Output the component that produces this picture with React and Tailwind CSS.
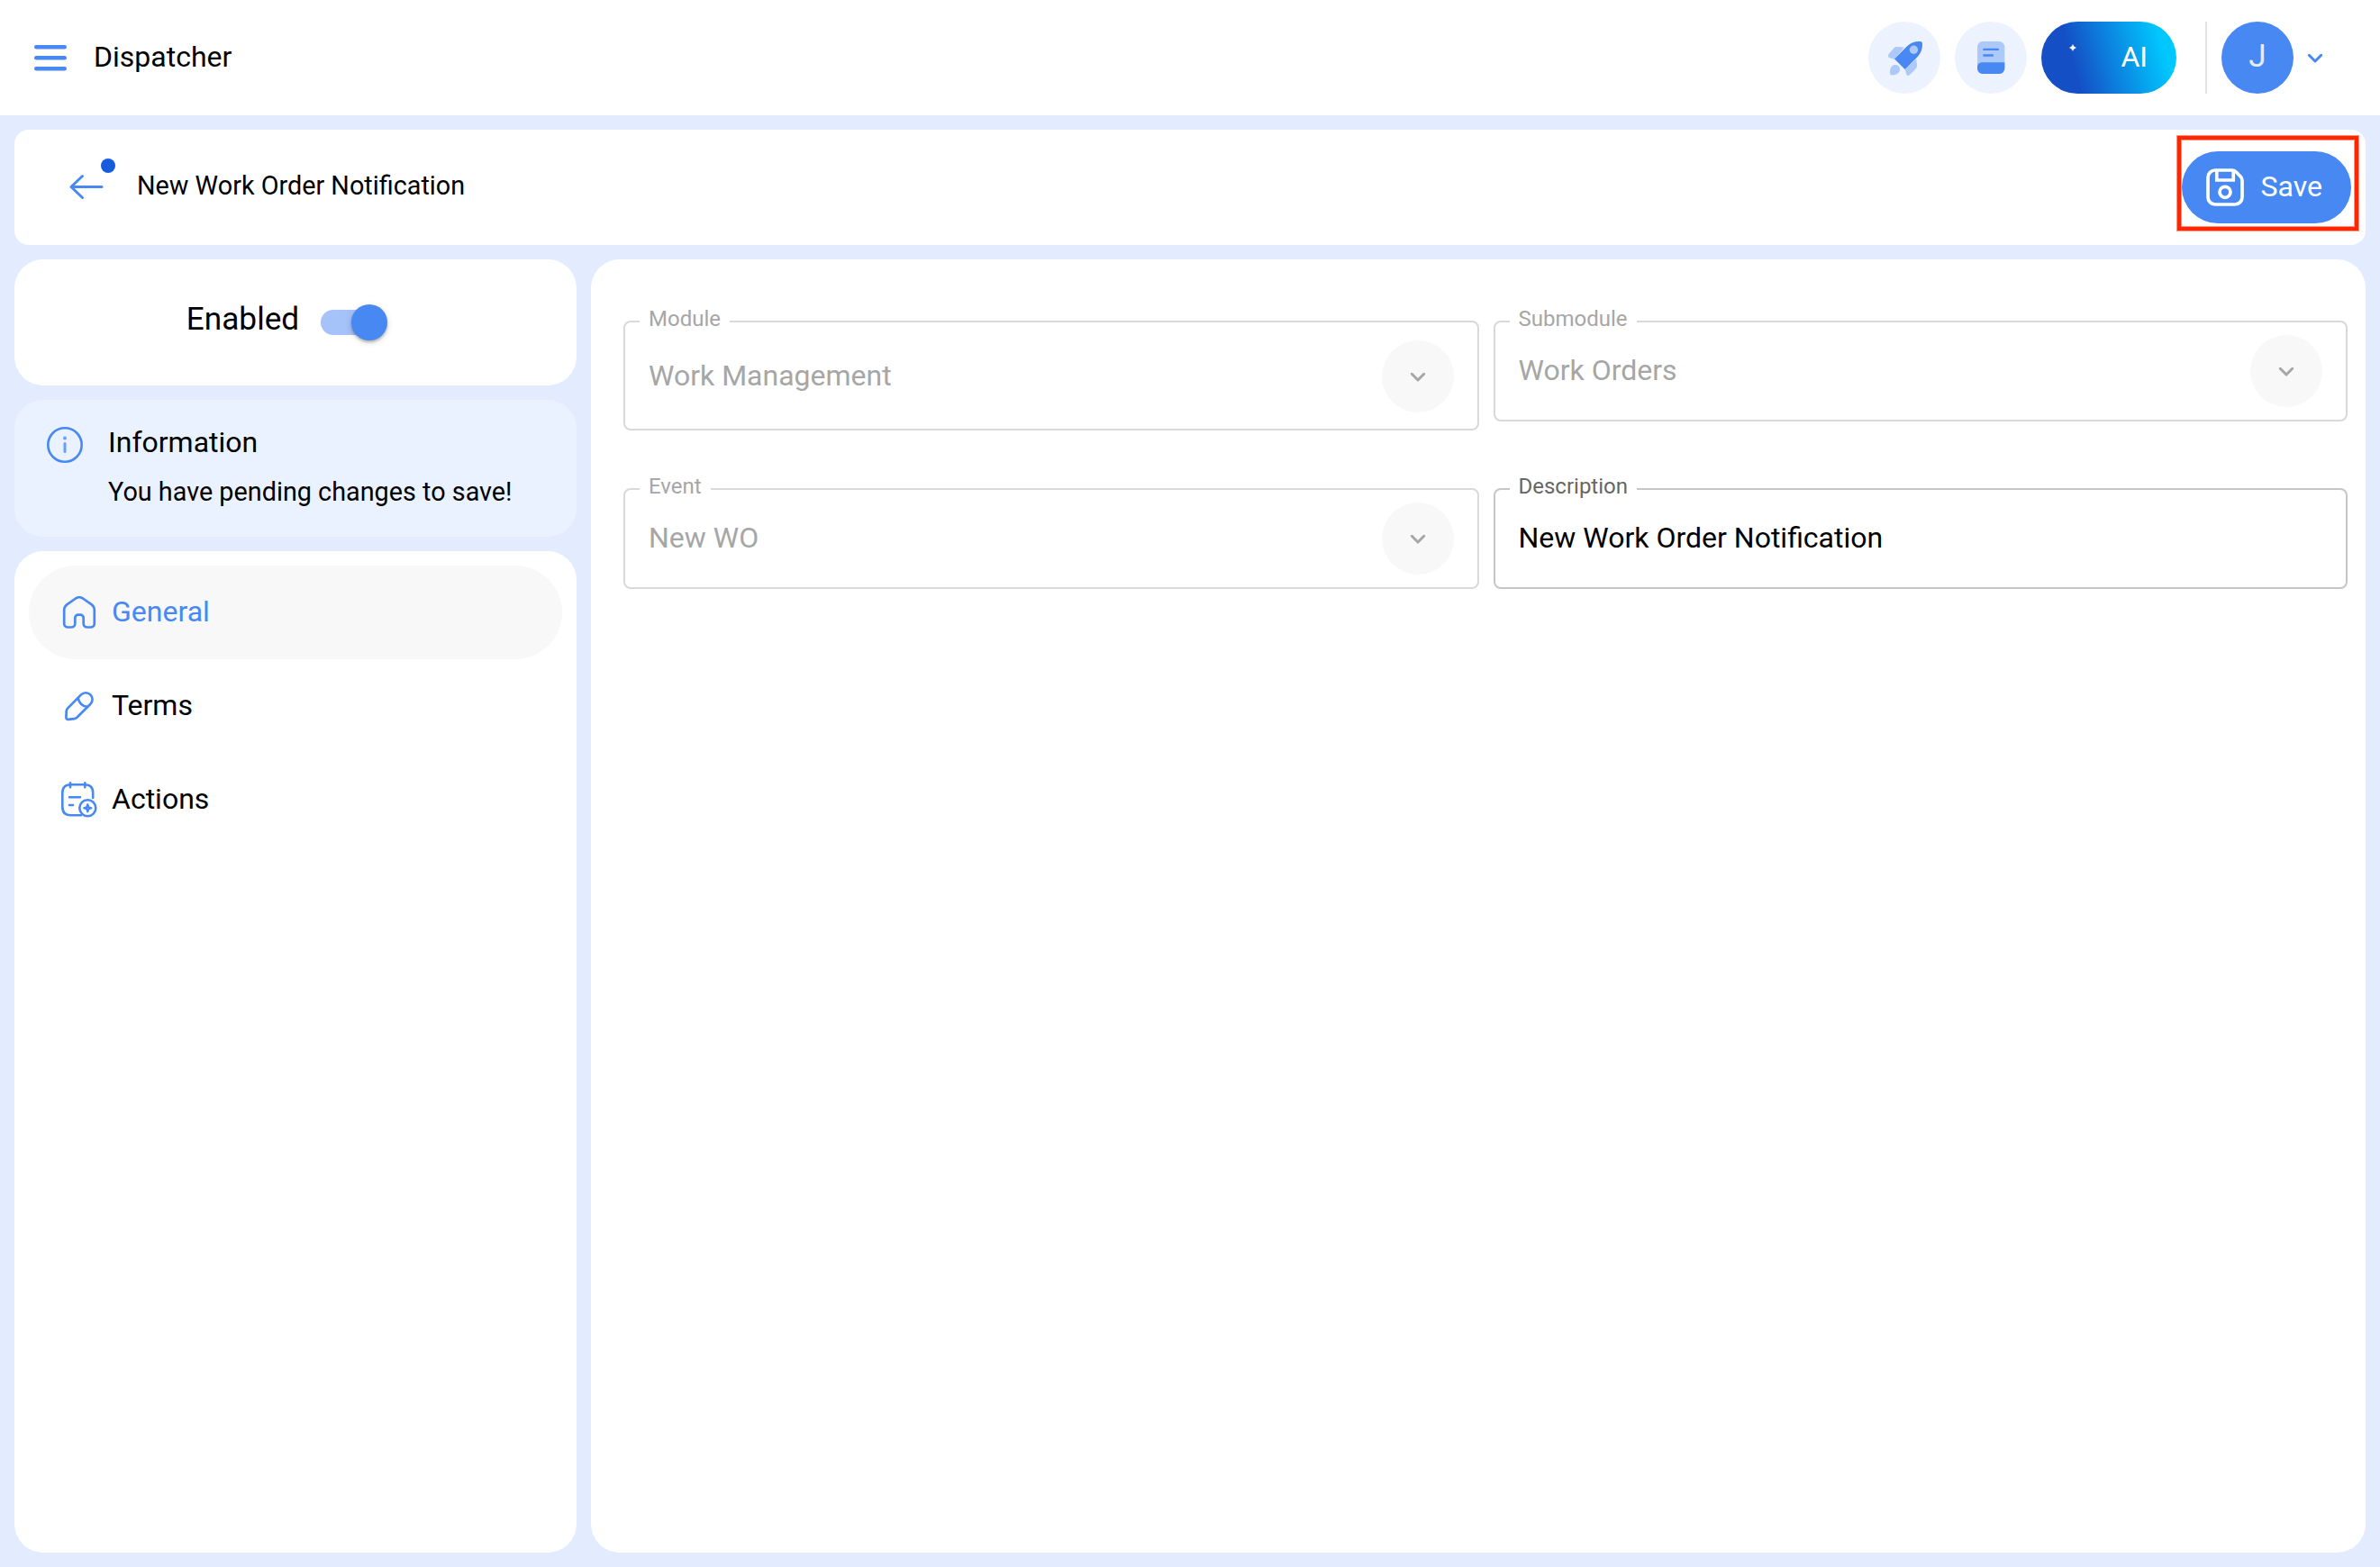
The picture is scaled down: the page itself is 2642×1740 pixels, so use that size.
import React, { useState } from 'react';
import clsx from 'clsx';

const ChevronIcon = ({ className }) => (
  <svg viewBox="0 0 24 24" fill="none" stroke="currentColor" strokeWidth="3" strokeLinecap="round" strokeLinejoin="round" className={clsx('h-6 w-6 shrink-0', className)}>
    <path d="M5.3 9.3 12 16l6.7-6.7" />
  </svg>
);

const MenuIcon = () => (
  <svg viewBox="0 0 48 48" fill="none" stroke="currentColor" strokeWidth="4.4" strokeLinecap="round" className="h-12 w-12">
    <path d="M8.2 12.3h31.6M8.2 24.3h31.6M8.2 36.3h31.6" />
  </svg>
);

const BackIcon = () => (
  <svg viewBox="0 0 48 48" fill="none" stroke="currentColor" strokeWidth="3" strokeLinecap="round" strokeLinejoin="round" className="h-12 w-12">
    <path d="M41 23.5H7M19.5 11.5 7 23.5l12.5 12" />
  </svg>
);

const RocketIcon = () => (
  <svg viewBox="0 0 48 48" className="h-12 w-12">
    <path fill="#adc9fa" d="M24 12.6 16 12c-2-.1-3 .5-4 1.7L6.5 20.3c-1.1 1.5-.6 3.4 1 3.9l5.5 1.5Z" />
    <path fill="#adc9fa" d="M37.2 25.5 38 31.5c.3 2.2-.2 3.7-1.5 5L30 43c-1.5 1.3-3.2 1.2-3.8-.5L24.7 37Z" />
    <path fill="#adc9fa" d="M8 40c0-5.5 2.6-8 6-8 3.5 0 5.3 2.5 5 5.5-.4 3.6-4 5.8-9 5.8-1.5 0-2-.8-2-3.3Z" />
    <path fill="#4788f3" d="M13 25.6 27 11.3C31 7.5 36 5.8 41.5 6c1.7 0 2.5 1 2.5 2.5.2 5.5-1.5 10.5-5.3 14.5l-14 14Z" />
    <circle cx="34.4" cy="15.3" r="4.7" fill="#adc9fa" />
  </svg>
);

const NotebookIcon = () => (
  <svg viewBox="0 0 48 48" className="h-12 w-12">
    <rect x="9" y="6" width="30.3" height="36" rx="6" fill="#adc9fa" />
    <path fill="#4788f3" d="M9 35c0-3.5 2-5.7 5.5-5.7h24.8V36a6 6 0 0 1-6 6H15a6 6 0 0 1-6-6Z" />
    <path d="M16.3 14.9h15.5M16.3 21.5h9.6" fill="none" stroke="#4788f3" strokeWidth="2.4" strokeLinecap="round" />
  </svg>
);

const SaveIcon = () => (
  <svg viewBox="0 0 48 48" fill="none" stroke="currentColor" strokeWidth="3.7" className="h-12 w-12">
    <path d="M13 5h18.5c2 0 3.3.6 4.5 1.8l5.2 5.2c1.2 1.2 1.8 2.5 1.8 4.5V35a8 8 0 0 1-8 8H13a8 8 0 0 1-8-8V13a8 8 0 0 1 8-8Z" />
    <path d="M14.8 5v11h18.4V5.5" />
    <circle cx="24" cy="29.3" r="6" />
  </svg>
);

const InfoIcon = () => (
  <svg viewBox="0 0 48 48" fill="none" stroke="currentColor" className="h-12 w-12 shrink-0">
    <circle cx="24" cy="24" r="18.7" strokeWidth="2.6" />
    <path d="M24 22.5v9" strokeWidth="3" strokeLinecap="round" opacity="0.8" />
    <circle cx="24" cy="16.5" r="2" fill="currentColor" stroke="none" opacity="0.8" />
  </svg>
);

const HomeIcon = () => (
  <svg viewBox="0 0 48 48" fill="none" stroke="currentColor" strokeWidth="2.7" strokeLinejoin="round" className="h-12 w-12">
    <path d="M7.2 21.5c0-3 1-4.7 3-6.2L20 8.5c2.8-1.8 5.2-1.8 8 0l9.8 6.8c2 1.5 3 3.2 3 6.2v15a4 4 0 0 1-4 4h-4.1a4 4 0 0 1-4-4v-6.3a3.5 3.5 0 0 0-3.5-3.5h-2.4a3.5 3.5 0 0 0-3.5 3.5v6.3a4 4 0 0 1-4 4h-4.1a4 4 0 0 1-4-4Z" />
  </svg>
);

const PencilIcon = () => (
  <svg viewBox="0 0 48 48" fill="none" stroke="currentColor" strokeWidth="2.7" strokeLinecap="round" strokeLinejoin="round" className="h-12 w-12">
    <path d="M11 26.6 26 11.4a7.35 7.35 0 0 1 10.4 10.4L21.3 36.7c-.9.8-1.8 1.2-3 1.5l-6.3.6c-1.7.2-2.7-.8-2.6-2.5l.3-6.5c.1-1.3.5-2.3 1.3-3.2Z" />
    <path d="M22.8 15c.4 5.2 4.7 9.4 10.2 9.9" />
  </svg>
);

const CalendarIcon = () => (
  <svg viewBox="0 0 48 48" fill="none" stroke="currentColor" strokeWidth="2.6" strokeLinecap="round" className="h-12 w-12">
    <path d="M26 41.2H14.5c-6 0-9.2-3.2-9.2-9.2V16.5c0-6 3.2-9.2 9.2-9.2H30c6 0 9.2 3.2 9.2 9.2V22" />
    <path d="M14 5.3v5M30.3 5.3v5" />
    <path d="M13 21.3h12M13 30h4" />
    <circle cx="33.3" cy="33.3" r="9" />
    <path d="m33.3 29.2 1 3.1 3.1 1-3.1 1-1 3.1-1-3.1-3.1-1 3.1-1Z" strokeWidth="2.2" strokeLinejoin="round" />
  </svg>
);

const navItems = [
  { label: 'General', icon: HomeIcon },
  { label: 'Terms', icon: PencilIcon },
  { label: 'Actions', icon: CalendarIcon },
];

// Outlined field, the label sits on top of the border
const Field = ({ label, value, disabled, className }) => (
  <div
    className={clsx(
      'relative flex items-center justify-between rounded-lg border-2 px-[26px]',
      disabled ? 'border-[#d9d9d9] text-[#a6a6a6]' : 'border-[#c6c6c6] text-black',
      className
    )}
  >
    <span className={clsx('absolute -top-5 left-4 bg-white px-2.5 text-2xl leading-8', !disabled && 'text-[#666]')}>
      {label}
    </span>
    <span className="pb-0.5 text-[32px] leading-10">{value}</span>
    {disabled && (
      <div className="flex h-20 w-20 items-center justify-center rounded-full bg-[#f8f8f8]">
        <ChevronIcon />
      </div>
    )}
  </div>
);

const App = () => {
  const [active, setActive] = useState('General');

  return (
    <div className="flex h-screen flex-col bg-[#e3ecff] font-['Roboto',sans-serif] text-black">
      {/* Top bar */}
      <header className="flex h-32 shrink-0 items-center justify-between bg-white pr-[60px] pl-8">
        <div className="flex items-center gap-6">
          <button className="text-[#4788f3]">
            <MenuIcon />
          </button>
          <h1 className="pb-0.5 text-[32px] leading-10">Dispatcher</h1>
        </div>

        <div className="flex items-center">
          <button className="mr-4 flex h-20 w-20 items-center justify-center rounded-full bg-[#ecf3fe]">
            <RocketIcon />
          </button>
          <button className="mr-4 flex h-20 w-20 items-center justify-center rounded-full bg-[#ecf3fe]">
            <NotebookIcon />
          </button>
          <button className="mr-8 flex h-20 w-[150px] items-center justify-between rounded-full bg-[linear-gradient(74deg,#144fc6_26%,#00c8ff_87%)] pr-8 pl-[31px] text-white">
            <svg viewBox="0 0 8 8" className="mb-[22px] h-2 w-2">
              <path fill="currentColor" d="M4 0c.6 2 1.8 3.200 4 4-2.200.8-3.400 2-4 4-.6-2-1.800-3.200-4-4 2.200-.8 3.400-2 4-4Z" />
            </svg>
            <span className="pb-0.5 text-[32px] leading-10">AI</span>
          </button>
          <div className="mr-4 h-20 w-0.5 bg-[#e2e2e2]"></div>
          <div className="mr-3 flex h-20 w-20 items-center justify-center rounded-full bg-[#4788f3] pb-1 text-[35.2px] leading-10 text-[#e3ecff]">
            J
          </div>
          <ChevronIcon className="text-[#4788f3]" />
        </div>
      </header>

      <main className="flex min-h-0 flex-1 flex-col gap-4 p-4">
        {/* Title bar */}
        <div className="flex h-32 shrink-0 items-center justify-between rounded-2xl bg-white pr-4 pl-14">
          <div className="flex items-center gap-8">
            <button className="relative text-[#4788f3]">
              <BackIcon />
              <span className="absolute -top-2 left-10 h-4 w-4 rounded-full bg-[#155ddd]"></span>
            </button>
            <h2 className="pb-1 text-[28.8px] leading-9">New Work Order Notification</h2>
          </div>
          <div className="relative">
            <button className="flex h-20 items-center gap-4 rounded-full bg-[#4788f3] pr-8 pl-6 text-white">
              <SaveIcon />
              <span className="pb-0.5 text-[32px] leading-10">Save</span>
            </button>
            <div className="pointer-events-none absolute -top-[17px] -right-2 -bottom-2 -left-[5px] border-4 border-[#ff2600] shadow-[0_0_0_1px_#ff260080,inset_0_0_0_1px_#ff260080]"></div>
          </div>
        </div>

        <div className="flex min-h-0 flex-1 gap-4">
          {/* Left column */}
          <aside className="flex w-[624px] shrink-0 flex-col gap-4">
            <div className="flex h-[140px] shrink-0 items-center justify-center gap-6 rounded-4xl bg-white pr-[19px]">
              <span className="pb-2 text-[35.2px] leading-10">Enabled</span>
              <div className="flex h-10 w-[74px] items-center">
                <div className="flex h-7 w-[72px] items-center rounded-full bg-[#a5c3f9] pl-[34px]">
                  <div className="h-10 w-10 shrink-0 rounded-full bg-[#4788f3] shadow-[0_2px_3px_rgba(0,0,0,0.25),0_2px_8px_rgba(0,0,0,0.12)]"></div>
                </div>
              </div>
            </div>

            <div className="flex h-[152px] shrink-0 gap-6 rounded-4xl bg-[#ebf2ff] px-8 pt-[26px]">
              <div className="text-[#4788f3]">
                <InfoIcon />
              </div>
              <div className="pt-px">
                <p className="text-[32px] leading-10">Information</p>
                <p className="mt-[17px] text-[28.8px] leading-9">You have pending changes to save!</p>
              </div>
            </div>

            <nav className="flex-1 rounded-4xl bg-white p-4">
              {navItems.map(({ label, icon: Icon }) => (
                <button
                  key={label}
                  onClick={() => setActive(label)}
                  className={clsx(
                    'flex h-[104px] w-full items-center gap-3 rounded-full pl-8',
                    active === label ? 'bg-[#f8f8f8] text-[#4788f3]' : 'text-black'
                  )}
                >
                  <span className="text-[#4788f3]">
                    <Icon />
                  </span>
                  <span className="pb-0.5 text-[32px] leading-10">{label}</span>
                </button>
              ))}
            </nav>
          </aside>

          {/* Form */}
          <section className="flex-1 rounded-4xl bg-white pt-[68px] pr-5 pl-9">
            <div className="grid grid-cols-[949.5px_948.5px] items-start gap-x-4 gap-y-16">
              <Field label="Module" value="Work Management" disabled className="h-[122px] pt-0.5" />
              <Field label="Submodule" value="Work Orders" disabled className="h-28" />
              <Field label="Event" value="New WO" disabled className="h-28" />
              <Field label="Description" value="New Work Order Notification" className="h-28" />
            </div>
          </section>
        </div>
      </main>
    </div>
  );
};

export default App;
